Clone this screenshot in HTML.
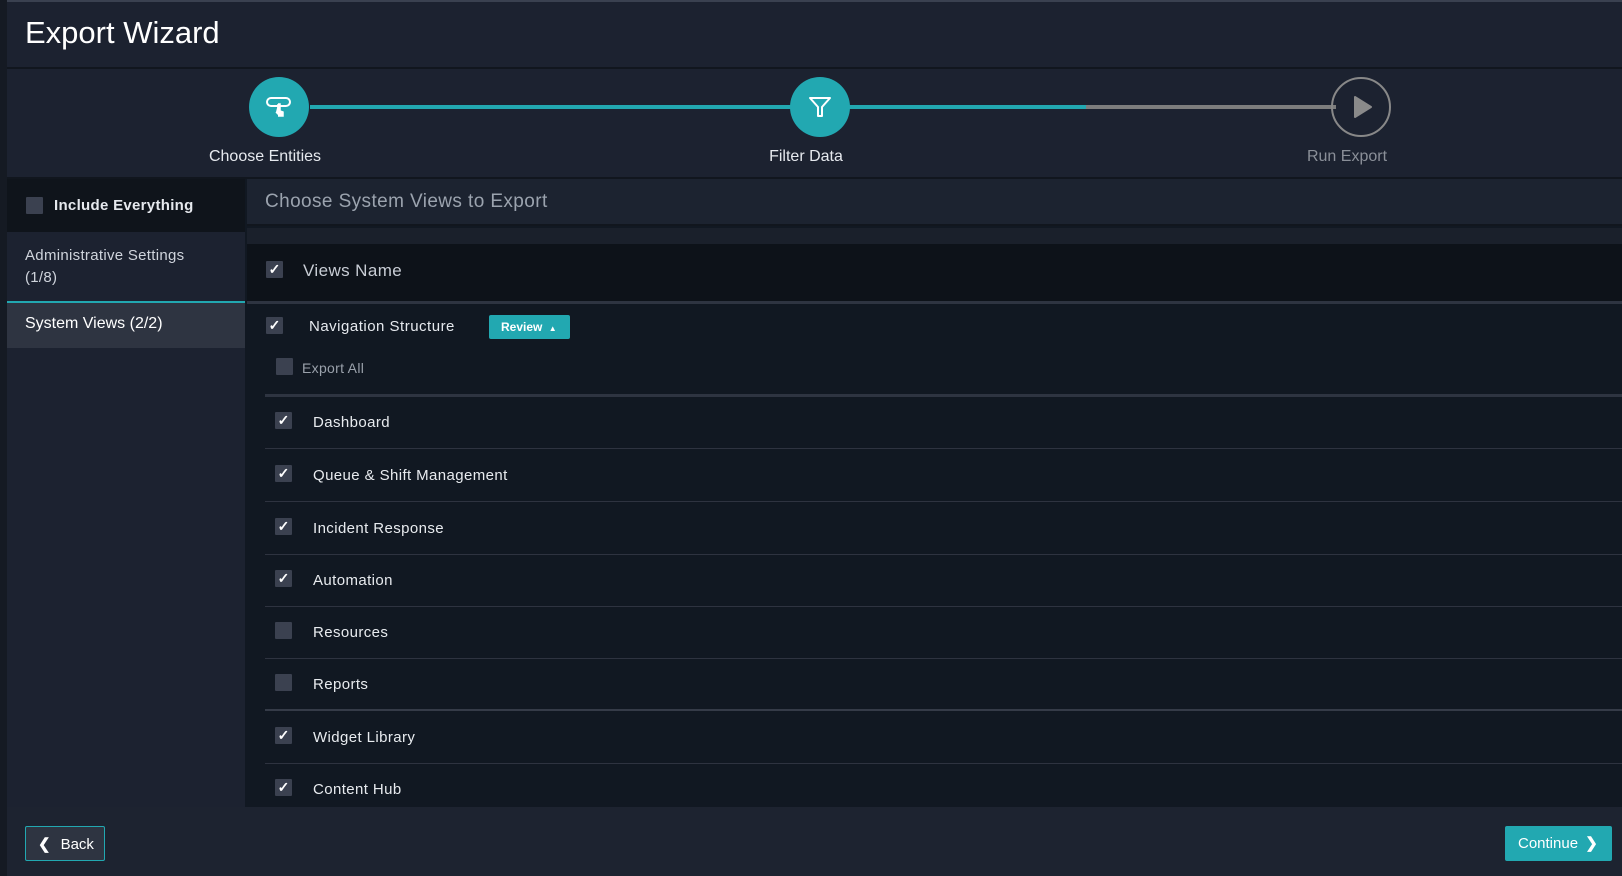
<!DOCTYPE html>
<html><head><meta charset="utf-8"><style>
*{box-sizing:border-box;margin:0;padding:0}
body{width:1622px;height:876px;background:#1c2230;font-family:"Liberation Sans",sans-serif;position:relative;overflow:hidden;color:#e6e9ee}
.abs{position:absolute}
.strip{left:0;top:0;width:7px;height:876px;background:#151a23}
.topline{left:0;top:0;width:1622px;height:2px;background:#3a4150}
.title{left:25px;top:15px;font-size:31px;color:#fff}
.hline{left:7px;top:67px;width:1615px;height:2px;background:#11161e}
.circ{width:60px;height:60px;border-radius:50%;background:#22a8b1;top:77px;display:flex;align-items:center;justify-content:center}
.lbl{top:148px;font-size:16px;transform:translateX(-50%);white-space:nowrap}
.cb{width:17px;height:17px;background:#3b4150;border-radius:1px;display:flex;align-items:center;justify-content:center;color:#fff;font-size:14px;font-weight:bold}
.row{left:265px;width:1357px;height:52px;border-bottom:1px solid #2e3340}
.row .cb{position:absolute;left:10px;top:15px}
.row span{position:absolute;left:48px;top:17px;font-size:15px;letter-spacing:.4px;color:#e8ebef}
</style></head><body>
<div class="abs topline"></div>
<div class="abs strip"></div>
<div class="abs title">Export Wizard</div>
<div class="abs hline"></div>
<div class="abs" style="left:310px;top:105px;width:776px;height:4px;background:#22a8b1"></div>
<div class="abs" style="left:1086px;top:105px;width:250px;height:4px;background:#7d7d7d"></div>
<div class="abs circ" style="left:249px">
<svg width="30" height="30" viewBox="0 0 30 30" fill="none" stroke="#fff" stroke-width="2"><rect x="3" y="6" width="23" height="8" rx="4"/><path d="M14 12v10l-2-2M14 12h2v7l3 1v4h-5" fill="#fff" stroke-width="1.5"/></svg></div>
<div class="abs circ" style="left:790px">
<svg width="26" height="26" viewBox="0 0 26 26" fill="none" stroke="#fff" stroke-width="2" stroke-linejoin="round"><path d="M3 4h20l-8 9v9h-4v-9z"/></svg></div>
<div class="abs" style="left:1331px;top:77px;width:60px;height:60px;border-radius:50%;border:2px solid #888;display:flex;align-items:center;justify-content:center">
<svg width="26" height="26" viewBox="0 0 26 26"><path d="M7 3L23 13L7 23Z" fill="#8a8a8a" stroke="#8a8a8a" stroke-width="2" stroke-linejoin="round"/></svg></div>
<div class="abs lbl" style="left:265px">Choose Entities</div>
<div class="abs lbl" style="left:806px">Filter Data</div>
<div class="abs lbl" style="left:1347px;color:#8a8f98">Run Export</div>
<div class="abs" style="left:7px;top:177px;width:1615px;height:2px;background:#11161e"></div>
<div class="abs" style="left:7px;top:179px;width:238px;height:628px;background:#1c2230"></div>
<div class="abs" style="left:7px;top:179px;width:238px;height:53px;background:#0f141b"></div>
<div class="abs cb" style="left:26px;top:197px"></div>
<div class="abs" style="left:54px;top:197px;font-size:15px;font-weight:bold;letter-spacing:.3px">Include Everything</div>
<div class="abs" style="left:25px;top:245px;font-size:15px;line-height:22px;color:#cfd4dc;letter-spacing:.3px">Administrative Settings<br>(1/8)</div>
<div class="abs" style="left:7px;top:301px;width:238px;height:2px;background:#22a8b1"></div>
<div class="abs" style="left:7px;top:303px;width:238px;height:45px;background:#2e3441"></div>
<div class="abs" style="left:25px;top:315px;font-size:16px;color:#fff">System Views (2/2)</div>
<div class="abs" style="left:245px;top:179px;width:1377px;height:628px;background:#111822"></div>
<div class="abs" style="left:247px;top:179px;width:1375px;height:47px;background:#1c2330;border-bottom:2px solid #11161e"></div>
<div class="abs" style="left:265px;top:191px;font-size:19px;color:#9ba3ae;letter-spacing:.4px">Choose System Views to Export</div>
<div class="abs" style="left:247px;top:228px;width:1375px;height:16px;background:#1a202b"></div>
<div class="abs" style="left:247px;top:244px;width:1375px;height:57px;background:#0d1219"></div>
<div class="abs cb" style="left:266px;top:261px">✓</div>
<div class="abs" style="left:303px;top:261px;font-size:17px;color:#c8cdd5;letter-spacing:.4px">Views Name</div>
<div class="abs" style="left:247px;top:301px;width:1375px;height:3px;background:#2e3441"></div>
<div class="abs cb" style="left:266px;top:317px">✓</div>
<div class="abs" style="left:309px;top:318px;font-size:15px;letter-spacing:.5px">Navigation Structure</div>
<div class="abs" style="left:489px;top:315px;width:81px;height:24px;background:#22a8b1;border-radius:2px;font-size:12px;font-weight:bold;color:#fff;padding:5px 0 0 12px">Review <span style="font-size:8px;margin-left:3px">▲</span></div>
<div class="abs cb" style="left:276px;top:358px"></div>
<div class="abs" style="left:302px;top:360px;font-size:14px;color:#9aa1ab;letter-spacing:.3px">Export All</div>
<div class="abs" style="left:265px;top:394px;width:1357px;height:3px;background:#2e3441"></div>
<div class="abs row" style="top:397px"><div class="cb">✓</div><span>Dashboard</span></div>
<div class="abs row" style="top:450px"><div class="cb">✓</div><span>Queue &amp; Shift Management</span></div>
<div class="abs row" style="top:503px"><div class="cb">✓</div><span>Incident Response</span></div>
<div class="abs row" style="top:555px"><div class="cb">✓</div><span>Automation</span></div>
<div class="abs row" style="top:607px"><div class="cb"></div><span>Resources</span></div>
<div class="abs row" style="top:659px;border-bottom:2px solid #353b48"><div class="cb"></div><span>Reports</span></div>
<div class="abs row" style="top:712px"><div class="cb">✓</div><span>Widget Library</span></div>
<div class="abs row" style="top:764px;border:none"><div class="cb">✓</div><span>Content Hub</span></div>
<div class="abs" style="left:7px;top:807px;width:1615px;height:69px;background:#1d2330"></div>
<div class="abs" style="left:25px;top:826px;width:80px;height:35px;background:#2e3441;border:1px solid #22a8b1;border-radius:2px;font-size:15px;color:#fff;padding:8px 0 0 12px"><b style="margin-right:10px">❮</b>Back</div>
<div class="abs" style="left:1505px;top:826px;width:107px;height:35px;background:#22a8b1;border-radius:2px;font-size:15px;color:#fff;padding:8px 0 0 13px">Continue <b style="margin-left:3px">❯</b></div>
</body></html>
